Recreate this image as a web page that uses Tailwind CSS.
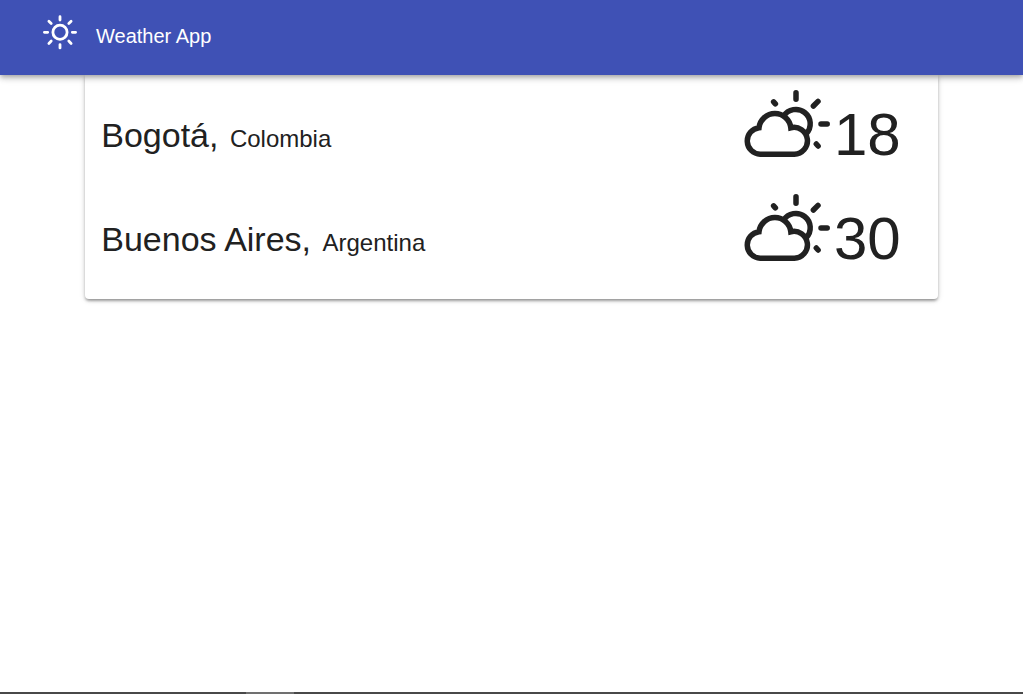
<!DOCTYPE html>
<html lang="en">
<head>
<meta charset="utf-8">
<meta name="viewport" content="width=device-width, initial-scale=1">
<title>Weather App</title>
<script src="https://cdn.jsdelivr.net/npm/@tailwindcss/browser@4"></script>
</head>
<body class="flex min-h-screen flex-col bg-white font-['Liberation_Sans',Arial,sans-serif] text-[#212121]">
<svg class="hidden" aria-hidden="true">
  <symbol id="day-cloudy" viewBox="0 0 88 70">
    <g fill="none" stroke="currentColor" stroke-width="5.5" stroke-linecap="round">
      <path stroke-linecap="butt" d="M50.3 64.2H16.2A13.3 13.3 0 0 1 15 37.7A16 16 0 0 1 46.8 37.8A13.4 13.4 0 1 1 50.3 64.2Z"/>
      <path stroke-linecap="butt" d="M39.6 26.2A14.4 14.4 0 1 1 62.2 43.8"/>
      <path d="M52 2.8v6.4M69.4 16l4.6-4.6M77 34h6.2M72.3 54l1.8 2M29.6 11.8l1.8 2"/>
    </g>
  </symbol>
</svg>
<header class="relative z-10 flex h-[75px] shrink-0 bg-[#3f51b5] px-[42px] text-white shadow-[0_2px_4px_-1px_rgba(0,0,0,0.2),0_4px_5px_0_rgba(0,0,0,0.14),0_1px_10px_0_rgba(0,0,0,0.12)]">
  <svg class="mt-[14px] size-9" viewBox="0 0 36 36" fill="none" stroke="currentColor" stroke-width="2.8" stroke-linecap="round" aria-hidden="true">
    <circle cx="18" cy="18.3" r="7.1"/>
    <path d="M18 2.7v3.3M18 30.6v3.3M2.4 18.3h3.3M30.3 18.3h3.3M6.9 7.2l2.3 2.3M26.8 9.5l2.3-2.3M6.9 29.4l2.3-2.3M26.8 27.1l2.3 2.3"/>
  </svg>
  <h1 class="ml-[18px] mt-5 text-xl leading-8">Weather App</h1>
</header>
<main class="mx-auto w-10/12">
  <ul class="rounded-b-sm px-4 pb-4 shadow-[0_3px_3px_-2px_rgba(0,0,0,0.2),0_2px_3px_0_rgba(0,0,0,0.24),0_1px_6px_0_rgba(0,0,0,0.14)]">
    <li class="flex h-[104px] items-center justify-between pt-4 pr-[21px]">
      <h2 class="text-[34px] leading-[42px]">Bogotá, <span class="ml-0.5 text-2xl">Colombia</span></h2>
      <div class="flex items-center gap-px">
        <svg class="mb-5 h-[70px] w-[88px]" aria-hidden="true"><use href="#day-cloudy"/></svg>
        <span class="w-[68px] text-right text-[60px] leading-[72px]">18</span>
      </div>
    </li>
    <li class="flex h-[104px] items-center justify-between pt-4 pr-[21px]">
      <h2 class="text-[34px] leading-[42px]">Buenos Aires, <span class="ml-0.5 text-2xl">Argentina</span></h2>
      <div class="flex items-center gap-px">
        <svg class="mb-5 h-[70px] w-[88px]" aria-hidden="true"><use href="#day-cloudy"/></svg>
        <span class="w-[68px] text-right text-[60px] leading-[72px]">30</span>
      </div>
    </li>
  </ul>
</main>
<footer class="mt-auto h-0.5 bg-[#484848] pl-[246px]"><div class="h-full w-12 bg-[#707070]"></div></footer>
</body>
</html>
